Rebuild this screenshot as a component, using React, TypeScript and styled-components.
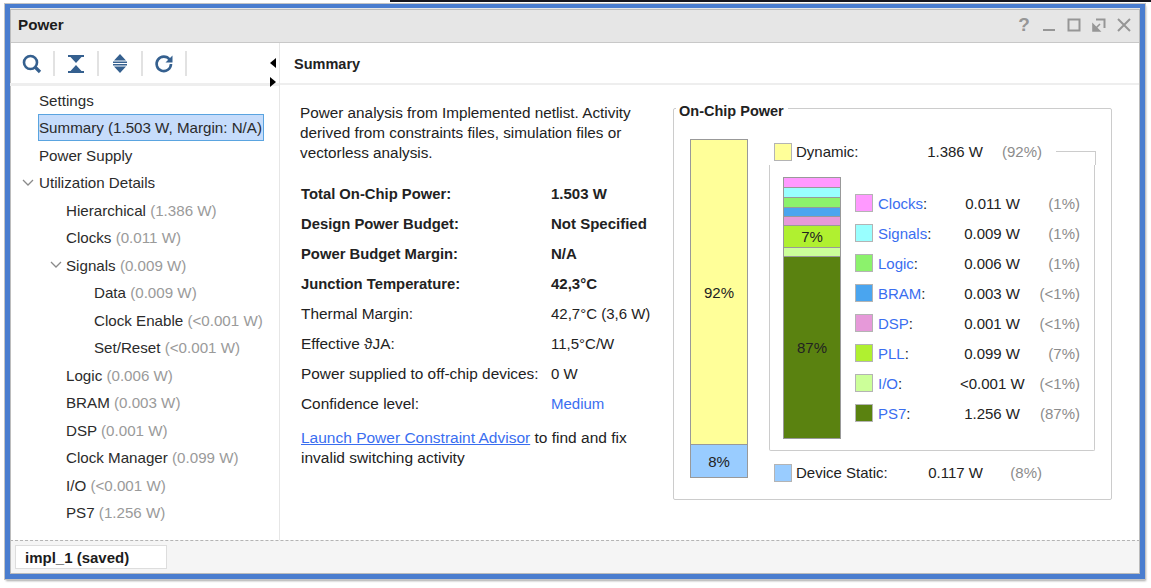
import React from 'react'
import styled, { createGlobalStyle } from 'styled-components'

const GlobalStyle = createGlobalStyle`
  html, body {
    margin: 0;
    padding: 0;
    background: #fff;
  }
  body {
    font-family: 'Liberation Sans', Arial, sans-serif;
    font-size: 15px;
    color: #222;
    overflow: hidden;
  }
`

interface TreeEntry {
  name: string
  info?: string
  level: number
  open?: boolean
  selected?: boolean
}

const treeEntries: TreeEntry[] = [
  { name: 'Settings', level: 0 },
  { name: 'Summary (1.503 W, Margin: N/A)', level: 0, selected: true },
  { name: 'Power Supply', level: 0 },
  { name: 'Utilization Details', level: 0, open: true },
  { name: 'Hierarchical', info: '(1.386 W)', level: 1 },
  { name: 'Clocks', info: '(0.011 W)', level: 1 },
  { name: 'Signals', info: '(0.009 W)', level: 1, open: true },
  { name: 'Data', info: '(0.009 W)', level: 2 },
  { name: 'Clock Enable', info: '(<0.001 W)', level: 2 },
  { name: 'Set/Reset', info: '(<0.001 W)', level: 2 },
  { name: 'Logic', info: '(0.006 W)', level: 1 },
  { name: 'BRAM', info: '(0.003 W)', level: 1 },
  { name: 'DSP', info: '(0.001 W)', level: 1 },
  { name: 'Clock Manager', info: '(0.099 W)', level: 1 },
  { name: 'I/O', info: '(<0.001 W)', level: 1 },
  { name: 'PS7', info: '(1.256 W)', level: 1 },
]

const summaryRows = [
  { label: 'Total On-Chip Power:', value: '1.503 W', strong: true },
  { label: 'Design Power Budget:', value: 'Not Specified', strong: true },
  { label: 'Power Budget Margin:', value: 'N/A', strong: true },
  { label: 'Junction Temperature:', value: '42,3°C', strong: true },
  { label: 'Thermal Margin:', value: '42,7°C (3,6 W)' },
  { label: 'Effective ϑJA:', value: '11,5°C/W' },
  { label: 'Power supplied to off-chip devices:', value: '0 W' },
]

const dynamicParts = [
  { name: 'Clocks', power: '0.011 W', pct: '(1%)', color: '#ff99ff', height: 9 },
  { name: 'Signals', power: '0.009 W', pct: '(1%)', color: '#99ffff', height: 10 },
  { name: 'Logic', power: '0.006 W', pct: '(1%)', color: '#8cf26c', height: 10 },
  { name: 'BRAM', power: '0.003 W', pct: '(<1%)', color: '#4aa5ef', height: 9 },
  { name: 'DSP', power: '0.001 W', pct: '(<1%)', color: '#e699d9', height: 9 },
  { name: 'PLL', power: '0.099 W', pct: '(7%)', color: '#b0f030', height: 22, text: '7%' },
  { name: 'I/O', power: '<0.001 W', pct: '(<1%)', color: '#ccff99', height: 9 },
  { name: 'PS7', power: '1.256 W', pct: '(87%)', color: '#5a8210', height: 182, text: '87%' },
]

const App: React.FC = () => {
  return (
    <>
      <GlobalStyle />
      <Page>
        <TopStrip />
        <Window>
          <TitleBar>
            <Title>Power</Title>
            <WindowButtons>
              <HelpMark>?</HelpMark>
              <svg width='14' height='14' viewBox='0 0 14 14'>
                <path d='M1 12h12' stroke='#969696' strokeWidth='2' />
              </svg>
              <svg width='14' height='14' viewBox='0 0 14 14'>
                <rect x='1.5' y='1.5' width='11' height='11' fill='none' stroke='#969696' strokeWidth='2' />
              </svg>
              <svg width='14' height='14' viewBox='0 0 14 14'>
                <path d='M4 1.5h8.5V10' fill='none' stroke='#969696' strokeWidth='2' />
                <path d='M1 6.5V13h6.5zM4 10l4-4' fill='#969696' stroke='#969696' strokeWidth='1.6' />
              </svg>
              <svg width='14' height='14' viewBox='0 0 14 14'>
                <path d='M1 1l12 12M13 1L1 13' fill='none' stroke='#969696' strokeWidth='2' />
              </svg>
            </WindowButtons>
          </TitleBar>

          <Panes>
            <LeftPane>
              <Toolbar>
                <ToolButton>
                  <svg width='20' height='20' viewBox='0 0 20 20'>
                    <circle cx='8.5' cy='8.5' r='6.5' fill='none' stroke='#35608f' strokeWidth='2.6' />
                    <path d='M13 13l5 5' stroke='#35608f' strokeWidth='3.2' />
                  </svg>
                </ToolButton>
                <ToolButton>
                  <svg width='16' height='18' viewBox='0 0 16 18'>
                    <path d='M0 0h16v2H0zM2.5 2h11L8 8zM2.5 16h11L8 10zM0 16h16v2H0z' fill='#35608f' />
                  </svg>
                </ToolButton>
                <ToolButton>
                  <svg width='16' height='19' viewBox='0 0 16 19'>
                    <path d='M8 0l6 6.5H2zM1 7.6h14v1.4H1zM1 10h14v1.4H1zM2 12.5h12L8 19z' fill='#35608f' />
                  </svg>
                </ToolButton>
                <ToolButton>
                  <svg width='20' height='20' viewBox='0 0 20 20'>
                    <path d='M15.6 5.6A7.2 7.2 0 1 0 17 10' fill='none' stroke='#35608f' strokeWidth='2.6' />
                    <path d='M18.5 1.5v7h-7z' fill='#35608f' />
                  </svg>
                </ToolButton>
              </Toolbar>
              <SplitArrow />
              <SplitArrow $right />
              <Tree>
                {treeEntries.map((entry) => (
                  <TreeRow key={entry.name} $level={entry.level}>
                    {entry.open && (
                      <Chevron $level={entry.level} width='12' height='8' viewBox='0 0 12 8'>
                        <path d='M1 1l5 5 5-5' fill='none' stroke='#8a8a8a' strokeWidth='1.3' />
                      </Chevron>
                    )}
                    <TreeLabel $selected={entry.selected}>
                      {entry.name}
                      {entry.info && <Muted> {entry.info}</Muted>}
                    </TreeLabel>
                  </TreeRow>
                ))}
              </Tree>
            </LeftPane>

            <RightPane>
              <PaneHeader>Summary</PaneHeader>
              <SummaryBody>
                <SummaryText>
                  <Intro>
                    Power analysis from Implemented netlist. Activity
                    <br />
                    derived from constraints files, simulation files or
                    <br />
                    vectorless analysis.
                  </Intro>
                  <SummaryTable>
                    {summaryRows.map((row) => (
                      <SummaryRow key={row.label} $strong={row.strong}>
                        <RowLabel>{row.label}</RowLabel>
                        <RowValue>{row.value}</RowValue>
                      </SummaryRow>
                    ))}
                    <SummaryRow>
                      <RowLabel>Confidence level:</RowLabel>
                      <RowValue>
                        <BlueText>Medium</BlueText>
                      </RowValue>
                    </SummaryRow>
                  </SummaryTable>
                  <Advisor>
                    <AdvisorLink href='#'>Launch Power Constraint Advisor</AdvisorLink> to find and fix
                    <br />
                    invalid switching activity
                  </Advisor>
                </SummaryText>

                <PowerPanel>
                  <PanelLegend>On-Chip Power</PanelLegend>
                  <TotalBar>
                    <BarPart $color='#ffff99' $height={304}>92%</BarPart>
                    <BarPart $color='#99ccff' $height={33}>8%</BarPart>
                  </TotalBar>
                  <Breakdown>
                    <TotalRow>
                      <Swatch $color='#ffff99' />
                      <TotalLabel>Dynamic:</TotalLabel>
                      <TotalValue>1.386 W</TotalValue>
                      <TotalPct>(92%)</TotalPct>
                      <Connector />
                    </TotalRow>
                    <DynamicBox>
                      <DynamicStack>
                        {dynamicParts.map((part) => (
                          <StackPart key={part.name} $color={part.color} $height={part.height}>
                            {part.text}
                          </StackPart>
                        ))}
                      </DynamicStack>
                      <DynamicLegend>
                        {dynamicParts.map((part) => (
                          <LegendRow key={part.name}>
                            <Swatch $color={part.color} />
                            <LegendName>
                              <BlueText>{part.name}</BlueText>:
                            </LegendName>
                            <LegendValue>{part.power}</LegendValue>
                            <LegendPct>{part.pct}</LegendPct>
                          </LegendRow>
                        ))}
                      </DynamicLegend>
                    </DynamicBox>
                    <StaticRow>
                      <Swatch $color='#99ccff' />
                      <TotalLabel>Device Static:</TotalLabel>
                      <TotalValue>0.117 W</TotalValue>
                      <TotalPct>(8%)</TotalPct>
                    </StaticRow>
                  </Breakdown>
                </PowerPanel>
              </SummaryBody>
            </RightPane>
          </Panes>

          <TabStrip>
            <RunTab>impl_1 (saved)</RunTab>
          </TabStrip>
        </Window>
      </Page>
    </>
  )
}

const Page = styled.div`
  width: 1151px;
  height: 588px;
  overflow: hidden;
  display: flex;
  flex-direction: column;
`

const TopStrip = styled.div`
  height: 2px;
  margin-left: 390px;
  background: #15151c;
  flex: none;
`

const Window = styled.div`
  width: 1140px;
  height: 575px;
  box-sizing: border-box;
  margin: 2px 0 0 5px;
  border: 5px solid #4a7dcf;
  border-top-width: 4px;
  box-shadow: 0 0 0 1px #c4c4c4, 1px 2px 2px #a8a8a8;
  display: flex;
  flex-direction: column;
  background: #fff;
  outline: 1px solid #bcbcbc;
  outline-offset: -6px;
`

const TitleBar = styled.div`
  height: 35px;
  flex: none;
  box-sizing: border-box;
  display: flex;
  align-items: center;
  justify-content: space-between;
  padding: 0 9px 0 8px;
  background: #e6e6e6;
  border-bottom: 1px solid #c8c8c8;
`

const Title = styled.div`
  font-weight: bold;
  font-size: 15.2px;
  padding-bottom: 2px;
  color: #1c1c1c;
`

const WindowButtons = styled.div`
  display: flex;
  align-items: center;
  gap: 11px;
`

const HelpMark = styled.span`
  width: 14px;
  text-align: center;
  font-size: 19px;
  font-weight: bold;
  line-height: 14px;
  color: #969696;
`

const Panes = styled.div`
  flex: 1;
  min-height: 0;
  display: flex;
`

const LeftPane = styled.div`
  width: 270px;
  flex: none;
  box-sizing: border-box;
  position: relative;
  border-right: 1px solid #e6e6e6;
`

const Toolbar = styled.div`
  height: 43px;
  box-sizing: border-box;
  display: flex;
  padding: 8px 0 0 1px;
  border-bottom: 3px solid #eeeeee;
`

const ToolButton = styled.div`
  width: 44px;
  height: 25px;
  box-sizing: border-box;
  display: flex;
  align-items: center;
  justify-content: center;
  border-right: 2px solid #e2e2e2;
`

const SplitArrow = styled.div<{ $right?: boolean }>`
  position: absolute;
  left: 260px;
  top: ${(props) => (props.$right ? '34px' : '15px')};
  width: 0;
  height: 0;
  border-top: 5.5px solid transparent;
  border-bottom: 5.5px solid transparent;
  ${(props) => (props.$right ? 'border-left: 6px solid #000;' : 'border-right: 6px solid #000;')}
`

const Tree = styled.div`
  padding-top: 0.5px;
`

const TreeRow = styled.div<{ $level: number }>`
  height: 27.5px;
  display: flex;
  align-items: center;
  position: relative;
  font-size: 15.15px;
  padding-left: ${(props) => [29, 56, 84][props.$level]}px;
`

const Chevron = styled.svg<{ $level: number }>`
  position: absolute;
  left: ${(props) => (props.$level === 0 ? 12 : 40)}px;
`

const TreeLabel = styled.span<{ $selected?: boolean }>`
  color: #2b2b2b;
  white-space: nowrap;
  line-height: 27px;
  ${(props) =>
    props.$selected &&
    `
    background: #c6dcfb;
    box-shadow: inset 0 0 0 1px #5aa4e0;
    padding: 0 2px 0 1px;
    margin-left: -1px;
  `}
`

const Muted = styled.span`
  color: #9a9a9a;
`

const RightPane = styled.div`
  flex: 1;
  min-width: 0;
`

const PaneHeader = styled.div`
  height: 42px;
  box-sizing: border-box;
  display: flex;
  align-items: center;
  padding: 1px 0 0 14px;
  font-weight: bold;
  font-size: 14.5px;
  color: #222;
  border-bottom: 2px solid #eeeeee;
`

const SummaryBody = styled.div`
  display: flex;
  align-items: flex-start;
  padding: 18px 0 0 20px;
`

const SummaryText = styled.div`
  width: 373px;
  flex: none;
`

const Intro = styled.div`
  font-size: 15.3px;
  line-height: 20px;
`

const SummaryTable = styled.div`
  margin-top: 16px;
  padding-left: 1px;
`

const SummaryRow = styled.div<{ $strong?: boolean }>`
  height: 30px;
  line-height: 30px;
  display: flex;
  align-items: baseline;
  font-weight: ${(props) => (props.$strong ? 'bold' : 'normal')};
  font-size: ${(props) => (props.$strong ? '14.8px' : '15.4px')};
`

const RowLabel = styled.div`
  width: 250px;
  flex: none;
  white-space: nowrap;
`

const RowValue = styled.div`
  font-size: 15px;
  white-space: nowrap;
`

const BlueText = styled.span`
  color: #3a6ef0;
  font-weight: normal;
`

const Advisor = styled.div`
  margin-top: 9px;
  padding-left: 1px;
  font-size: 15.5px;
  line-height: 20px;
`

const AdvisorLink = styled.a`
  color: #3a6ef0;
  text-decoration: underline;
`

const PowerPanel = styled.div`
  position: relative;
  width: 439px;
  height: 392px;
  box-sizing: border-box;
  margin-top: 5px;
  padding: 30px 0 0 16px;
  border: 1px solid #cccccc;
  border-radius: 2px;
  display: flex;
  align-items: flex-start;
`

const PanelLegend = styled.div`
  position: absolute;
  left: 2px;
  top: -7px;
  padding: 0 4px 0 3px;
  background: #fff;
  font-weight: bold;
  font-size: 14.5px;
  line-height: 18px;
  color: #222;
`

const TotalBar = styled.div`
  width: 58px;
  box-sizing: border-box;
  flex: none;
  border: 1px solid #999999;
`

const BarPart = styled.div<{ $color: string; $height: number }>`
  height: ${(props) => props.$height}px;
  box-sizing: border-box;
  display: flex;
  align-items: center;
  justify-content: center;
  background: ${(props) => props.$color};
  & + & {
    border-top: 1px solid #999999;
  }
`

const Breakdown = styled.div`
  width: 326px;
  flex: none;
  margin-left: 21px;
  margin-top: -1px;
`

const TotalRow = styled.div`
  height: 27px;
  display: flex;
  align-items: flex-start;
  padding: 5px 0 0 5px;
  box-sizing: border-box;
  line-height: 18px;
`

const StaticRow = styled(TotalRow)`
  margin-top: 13px;
  height: 18px;
  padding-top: 0;
`

const Swatch = styled.div<{ $color: string }>`
  width: 18px;
  height: 18px;
  box-sizing: border-box;
  flex: none;
  border: 1.5px solid #b4b4b4;
  background: ${(props) => props.$color};
`

const TotalLabel = styled.div`
  width: 130px;
  margin-left: 4px;
  flex: none;
  white-space: nowrap;
`

const TotalValue = styled.div`
  width: 57px;
  flex: none;
  text-align: right;
  white-space: nowrap;
`

const TotalPct = styled.div`
  width: 59px;
  flex: none;
  text-align: right;
  color: #8c8c8c;
`

const Connector = styled.div`
  width: 39px;
  height: 13px;
  margin: 8px 0 0 14px;
  flex: none;
  border-top: 1px solid #cccccc;
  border-right: 1px solid #cccccc;
`

const DynamicBox = styled.div`
  height: 286px;
  box-sizing: border-box;
  padding: 12px 0 0 13px;
  display: flex;
  align-items: flex-start;
  border: 1px solid #cccccc;
  border-top: none;
  border-radius: 0 0 2px 2px;
`

const DynamicStack = styled.div`
  width: 58px;
  flex: none;
  box-sizing: border-box;
  border: 1px solid #999999;
`

const StackPart = styled.div<{ $color: string; $height: number }>`
  height: ${(props) => props.$height}px;
  box-sizing: border-box;
  display: flex;
  align-items: center;
  justify-content: center;
  background: ${(props) => props.$color};
  color: #222;
  & + & {
    border-top: 1px solid #999999;
  }
`

const DynamicLegend = styled.div`
  margin: 11px 0 0 14px;
`

const LegendRow = styled.div`
  height: 30px;
  display: flex;
  align-items: center;
`

const LegendName = styled.div`
  width: 82px;
  margin-left: 5px;
  flex: none;
`

const LegendValue = styled.div`
  width: 60px;
  flex: none;
  text-align: right;
  white-space: nowrap;
`

const LegendPct = styled.div`
  width: 60px;
  flex: none;
  text-align: right;
  color: #8c8c8c;
`

const TabStrip = styled.div`
  height: 34px;
  flex: none;
  box-sizing: border-box;
  padding: 4px 0 0 5px;
  background: #f5f5f5;
  border-top: 1px dashed #b4b4b4;
`

const RunTab = styled.div`
  width: 152px;
  height: 24px;
  box-sizing: border-box;
  display: flex;
  align-items: center;
  padding-left: 9px;
  background: #fff;
  border: 1px solid #dddddd;
  font-weight: bold;
  color: #1c1c1c;
`

export default App
